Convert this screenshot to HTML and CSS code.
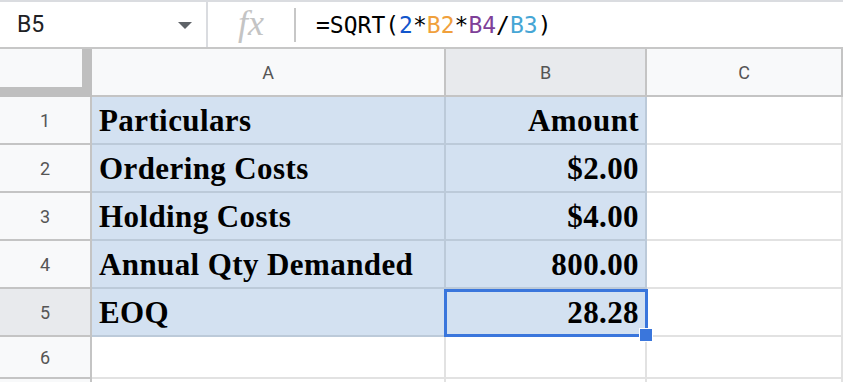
FILE: index.html
```html
<!DOCTYPE html>
<html lang="en">
<head>
    <meta charset="UTF-8">
    <title>EOQ - Sheet</title>
    <link rel="stylesheet" href="styles.css">
</head>
<body>
    <div class="formula-bar">
        <div class="name-box">
            <span class="cell-ref">B5</span>
            <span class="caret"></span>
        </div>
        <div class="fx">fx</div>
        <div class="formula">=SQRT(<span class="f-num">2</span>*<span class="f-b2">B2</span>*<span class="f-b4">B4</span>/<span class="f-b3">B3</span>)</div>
    </div>

    <div class="grid">
        <div class="corner"></div>
        <div class="col-head">A</div>
        <div class="col-head active">B</div>
        <div class="col-head">C</div>

        <div class="row-head">1</div>
        <div class="cell fill">Particulars</div>
        <div class="cell fill num">Amount</div>
        <div class="cell"></div>

        <div class="row-head">2</div>
        <div class="cell fill">Ordering Costs</div>
        <div class="cell fill num">$2.00</div>
        <div class="cell"></div>

        <div class="row-head">3</div>
        <div class="cell fill">Holding Costs</div>
        <div class="cell fill num">$4.00</div>
        <div class="cell"></div>

        <div class="row-head">4</div>
        <div class="cell fill">Annual Qty Demanded</div>
        <div class="cell fill num">800.00</div>
        <div class="cell"></div>

        <div class="row-head active">5</div>
        <div class="cell fill">EOQ</div>
        <div class="cell fill num selected">
            28.28
            <div class="selection"><span class="handle"></span></div>
        </div>
        <div class="cell"></div>

        <div class="row-head">6</div>
        <div class="cell"></div>
        <div class="cell"></div>
        <div class="cell"></div>

        <div class="row-head"></div>
        <div class="cell"></div>
        <div class="cell"></div>
        <div class="cell"></div>
    </div>
</body>
</html>
```

FILE: styles.css
```css
body {
    margin: 0;
    background: white;
    overflow: hidden;
    font-family: Roboto, "Noto Sans", sans-serif;
}

/* formula bar */
.formula-bar {
    display: flex;
    align-items: center;
    height: 49px;
    box-sizing: border-box;
    border-top: 2px solid #dadce0;
    border-bottom: 2px solid #c7c7c7;
}
.name-box {
    display: flex;
    align-items: center;
    justify-content: space-between;
    width: 208px;
    height: 100%;
    box-sizing: border-box;
    padding: 0 14px 0 17px;
    border-right: 2px solid #dadce0;
}
.cell-ref {
    font-size: 23px;
    color: #202124;
}
.caret {
    width: 0;
    height: 0;
    border-left: 7px solid transparent;
    border-right: 7px solid transparent;
    border-top: 7px solid #5f6368;
    margin-top: 2px;
}
.fx {
    width: 86px;
    text-align: center;
    font-family: "Liberation Serif", serif;
    font-style: italic;
    font-size: 36px;
    line-height: 1;
    color: #c4c4c4;
    margin-top: -4px;
}
.formula {
    height: 34px;
    display: flex;
    align-items: center;
    border-left: 2px solid #c7c7c7;
    padding-left: 20px;
    font-family: "DejaVu Sans Mono", monospace;
    font-size: 23px;
    color: #000;
}
.f-num { color: #1155cc; }
.f-b2 { color: #f0a03c; }
.f-b4 { color: #7e3f98; }
.f-b3 { color: #46a6d5; }

/* sheet grid */
.grid {
    display: grid;
    grid-template-columns: 92px 354px 201px 1fr;
    grid-template-rows: 48px repeat(5, 48px) 42px 48px;
}
.grid > div {
    box-sizing: border-box;
    border-right: 2px solid #e2e2e2;
    border-bottom: 2px solid #e2e2e2;
}
.grid > .corner {
    background: #f8f9fa;
    border-right: 10px solid #bfbfbf;
    border-bottom: 10px solid #bfbfbf;
}
.grid > .col-head,
.grid > .row-head {
    display: flex;
    align-items: center;
    justify-content: center;
    background: #f8f9fa;
    border-color: #c4c4c4;
    color: #555;
    font-size: 18px;
}
.grid > .active {
    background: #e8eaed;
}
.cell {
    display: flex;
    align-items: flex-end;
    padding: 0 6px 7px 7px;
    font-family: "Liberation Serif", serif;
    font-weight: bold;
    font-size: 31px;
    letter-spacing: 0.4px;
    line-height: 30px;
    color: #000;
    white-space: nowrap;
}
.grid > .fill {
    background: #d3e1f1;
    border-color: #bccad9;
}
.num {
    justify-content: flex-end;
}
.selected {
    position: relative;
}
.selection {
    position: absolute;
    left: -2px;
    top: 0;
    width: 204px;
    height: 48px;
    box-sizing: border-box;
    border: 3px solid #3a76dc;
}
.handle {
    position: absolute;
    right: -8px;
    bottom: -8px;
    width: 14px;
    height: 14px;
    box-sizing: border-box;
    background: #3a76dc;
    border: 1px solid white;
}
```
